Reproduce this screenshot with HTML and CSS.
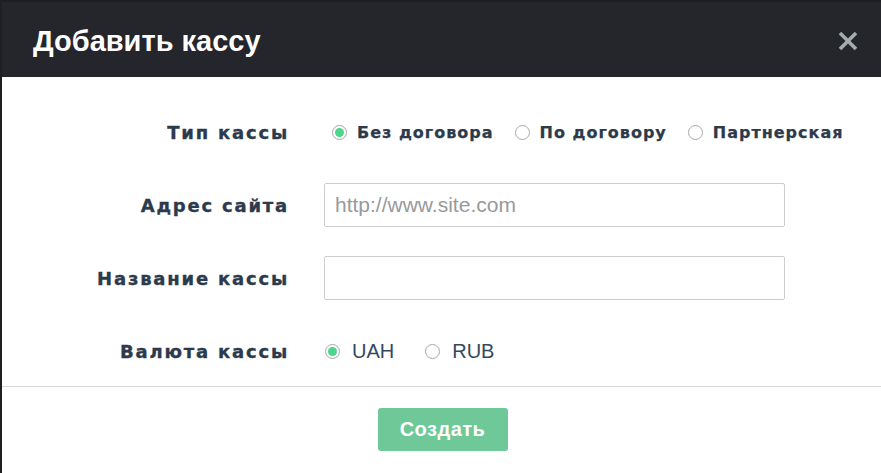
FILE: index.html
```html
<!DOCTYPE html>
<html lang="ru">
<head>
<meta charset="utf-8">
<title>Добавить кассу</title>
<link rel="stylesheet" href="styles.css">
</head>
<body>
<div class="backdrop">
  <div class="modal">
    <div class="modal-header">
      <h1 class="modal-title">Добавить кассу</h1>
      <svg class="close" width="22" height="22" viewBox="0 0 22 22" aria-label="Закрыть">
        <path d="M3 3 L19 19 M19 3 L3 19" stroke="#a3aeac" stroke-width="3.6" stroke-linecap="butt" fill="none"/>
      </svg>
    </div>
    <div class="modal-body">
      <div class="row">
        <div class="label">Тип кассы</div>
        <div class="field radios bold">
          <label class="radio"><span class="dot checked"></span>Без договора</label>
          <label class="radio"><span class="dot"></span>По договору</label>
          <label class="radio"><span class="dot"></span>Партнерская</label>
        </div>
      </div>
      <div class="row">
        <div class="label">Адрес сайта</div>
        <div class="field"><div class="input placeholder">http://www.site.com</div></div>
      </div>
      <div class="row">
        <div class="label">Название кассы</div>
        <div class="field"><div class="input"></div></div>
      </div>
      <div class="row">
        <div class="label">Валюта кассы</div>
        <div class="field radios currency">
          <label class="radio"><span class="dot checked"></span>UAH</label>
          <label class="radio"><span class="dot"></span>RUB</label>
        </div>
      </div>
    </div>
    <div class="modal-footer">
      <button class="btn">Создать</button>
    </div>
  </div>
</div>
</body>
</html>
```
FILE: styles.css
```css
html, body {
  margin: 0;
  padding: 0;
  height: 100%;
  overflow: hidden;
}
body {
  background: #1e1f22;
}
.backdrop {
  padding: 2px 0 0 2px;
  height: 100%;
  box-sizing: border-box;
}
.modal {
  background: #fff;
  height: 100%;
}
.modal-header {
  background: #25262b;
  height: 75px;
  display: flex;
  align-items: center;
  justify-content: space-between;
  padding: 3px 22px 0 31px;
  box-sizing: border-box;
}
.modal-title {
  margin: 0;
  color: #fff;
  font-family: "Liberation Sans Narrow", "Liberation Sans", sans-serif;
  font-weight: bold;
  font-size: 29px;
}
.close {
  display: block;
  margin-top: 0;
}
.modal-body {
  padding: 33px 0 13px 0;
  display: flex;
  flex-direction: column;
  gap: 29px;
  border-bottom: 1px solid #d8d8d8;
}
.row {
  display: flex;
  align-items: center;
  min-height: 44px;
}
.label {
  width: 287px;
  flex: none;
  text-align: right;
  font-family: "DejaVu Sans", sans-serif;
  font-weight: bold;
  font-size: 18px;
  letter-spacing: 1.8px;
  -webkit-text-stroke: 0.35px #2c3a4b;
  color: #2c3a4b;
  box-sizing: border-box;
}
.field {
  margin-left: 35px;
  flex: none;
}
.radios {
  display: flex;
  align-items: center;
  color: #2c3a4b;
}
.radios.bold {
  font-family: "DejaVu Sans", sans-serif;
  font-weight: bold;
  font-size: 16px;
  letter-spacing: 1px;
  -webkit-text-stroke: 0.25px #2c3a4b;
  margin-left: 43px;
  gap: 21px;
}
.radios.currency {
  font-family: "Liberation Sans", sans-serif;
  font-size: 20px;
  color: #34495e;
  margin-left: 36px;
  gap: 31px;
}
.radio {
  display: flex;
  align-items: center;
  gap: 10px;
}
.currency .radio { gap: 12px; }
.dot {
  width: 15px;
  height: 15px;
  border: 1px solid #a8a8a8;
  border-radius: 50%;
  box-sizing: border-box;
  background: #fff;
  position: relative;
  flex: none;
}
.dot.checked::after {
  content: "";
  position: absolute;
  left: 2px;
  top: 2px;
  width: 9px;
  height: 9px;
  border-radius: 50%;
  background: #4cd68a;
}
.input {
  width: 461px;
  height: 44px;
  border: 1px solid #cdcdcd;
  border-radius: 2px;
  box-sizing: border-box;
  padding: 0 10px;
  display: flex;
  align-items: center;
  font-family: "Liberation Sans", sans-serif;
  font-size: 21px;
}
.placeholder {
  color: #999;
}
.modal-footer {
  display: flex;
  justify-content: center;
  padding-top: 21px;
}
.btn {
  width: 130px;
  height: 43px;
  background: #6fc897;
  border: none;
  border-radius: 3px;
  color: #fff;
  font-family: "Liberation Sans", sans-serif;
  font-weight: bold;
  font-size: 20px;
  letter-spacing: 0.5px;
  margin-left: 2px;
  padding: 0;
}
```
